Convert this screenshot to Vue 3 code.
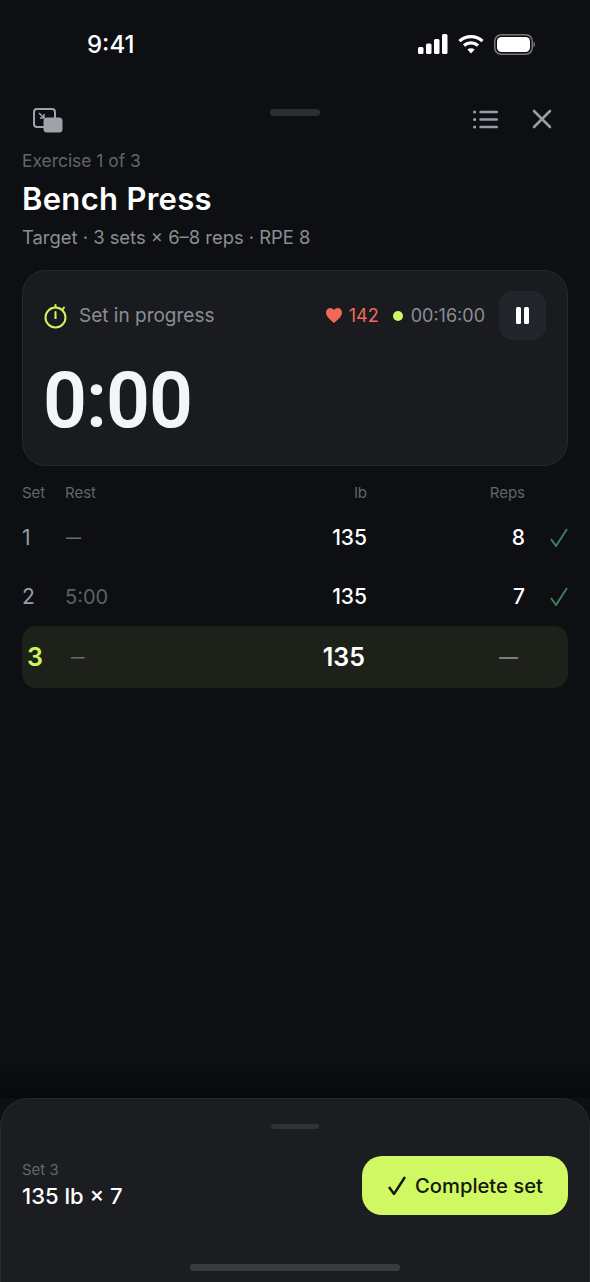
<script setup>
const sets = [
  { n: 1, rest: '—', lb: 135, reps: 8 },
  { n: 2, rest: '5:00', lb: 135, reps: 7 },
]
</script>

<template>
  <main class="page">
    <div class="status">
      <span class="clock">9:41</span>
      <div class="status-icons">
        <svg width="30" height="20" viewBox="0 0 30 20" fill="#fff">
          <rect x="0" y="13" width="5.5" height="7" rx="1.5" />
          <rect x="8" y="9.5" width="5.5" height="10.5" rx="1.5" />
          <rect x="16" y="5" width="5.5" height="15" rx="1.5" />
          <rect x="24" y="0" width="5.5" height="20" rx="1.5" />
        </svg>
        <svg width="26" height="20" viewBox="0 0 26 20" fill="none" stroke="#fff" stroke-width="3.2">
          <path d="M1.5 7.2C8 1 18 1 24.5 7.2" />
          <path d="M6 11.5c4-3.6 10-3.6 14 0" />
          <path d="M13 19.5l-3.6-4c2-1.7 5.2-1.7 7.2 0z" fill="#fff" stroke="none" />
        </svg>
        <svg width="41" height="21" viewBox="0 0 41 21" fill="none">
          <rect x=".75" y=".75" width="37.5" height="19.5" rx="6.5" stroke="#77797d" stroke-width="1.5" />
          <rect x="3" y="3" width="33" height="15" rx="4.5" fill="#fff" />
          <path d="M39.500 7.500c.9.400 1.500 1.600 1.500 3s-.6 2.600-1.500 3z" fill="#77797d" />
        </svg>
      </div>
    </div>

    <header class="top">
      <svg class="icon-pip" width="30" height="25" viewBox="0 0 30 25" fill="none">
        <rect x="1" y="1" width="21" height="18" rx="3" stroke="#9ea2ab" stroke-width="2" />
        <path d="M6 5l5 5M11 6v4H7" stroke="#9ea2ab" stroke-width="1.6" />
        <rect x="10.500" y="9.500" width="19" height="15" rx="3.500" fill="#9ea2ab" />
      </svg>
      <span class="grabber"></span>
      <div class="top-actions">
        <svg width="25" height="19" viewBox="0 0 25 19" fill="none" stroke="#9a9da5" stroke-width="2.400" stroke-linecap="round">
          <path d="M7.500 2H23.800M7.500 9.500H23.800M7.500 17H23.800" />
          <circle cx="1.600" cy="2" r="1.600" fill="#9a9da5" stroke="none" />
          <circle cx="1.600" cy="9.500" r="1.600" fill="#9a9da5" stroke="none" />
          <circle cx="1.600" cy="17" r="1.600" fill="#9a9da5" stroke="none" />
        </svg>
        <svg width="20" height="20" viewBox="0 0 20 20" fill="none" stroke="#9a9da5" stroke-width="2.600" stroke-linecap="round">
          <path d="M2 2l16 16M18 2L2 18" />
        </svg>
      </div>
    </header>

    <section class="intro">
      <div class="eyebrow">Exercise 1 of 3</div>
      <h1>Bench Press</h1>
      <div class="target">Target · 3 sets × 6–8 reps · RPE 8</div>
    </section>

    <section class="card">
      <div class="card-top">
        <svg width="24" height="26" viewBox="0 0 24 26" fill="none" stroke="#cff662" stroke-width="2" stroke-linecap="round">
          <circle cx="11.500" cy="14.500" r="10" />
          <path d="M11.500 2V4M11.500 9v6M20 4.500l-1 1.500" />
          <circle cx="11.500" cy="15" r="1" fill="#cff662" stroke="none" />
        </svg>
        <span class="state">Set in progress</span>
        <svg class="heart" width="16" height="15" viewBox="0 0 16 15" fill="#f2695c">
          <path d="M8 15C3 11 0 8.300 0 4.600 0 2 2 0 4.400 0 5.900 0 7.200.7 8 2c.8-1.300 2.100-2 3.600-2C14 0 16 2 16 4.600 16 8.300 13 11 8 15z" />
        </svg>
        <span class="bpm">142</span>
        <span class="dot"></span>
        <span class="elapsed">00:16:00</span>
        <button class="pause" aria-label="Pause">
          <span></span><span></span>
        </button>
      </div>
      <div class="time">0:00</div>
    </section>

    <section class="table">
      <div class="row head">
        <span>Set</span>
        <span>Rest</span>
        <span class="num">lb</span>
        <span class="num">Reps</span>
        <span></span>
      </div>
      <div v-for="s in sets" :key="s.n" class="row done">
        <span class="set">{{ s.n }}</span>
        <span class="rest" :class="{ 'rest-empty': s.rest === '—' }">{{ s.rest }}</span>
        <span class="num">{{ s.lb }}</span>
        <span class="num">{{ s.reps }}</span>
        <svg class="tick" width="18" height="19" viewBox="0 0 18 19" fill="none" stroke="#3f7c57" stroke-width="2">
          <path d="M1 11l5 7L17 1" />
        </svg>
      </div>
      <div class="row-active">
        <span class="set">3</span>
        <span class="rest rest-empty">—</span>
        <span class="num">135</span>
        <span class="num dash">—</span>
      </div>
    </section>

    <div class="fade"></div>

    <footer class="sheet">
      <span class="sheet-handle"></span>
      <div class="sheet-body">
        <div class="sheet-info">
          <div class="sheet-label">Set 3</div>
          <div class="sheet-value">135 lb × 7</div>
        </div>
        <button class="complete">
          <svg width="18" height="19" viewBox="0 0 18 19" fill="none" stroke="#14160f" stroke-width="2.400">
            <path d="M1 11l5 7L17 1" />
          </svg>
          Complete set
        </button>
      </div>
      <span class="home"></span>
    </footer>
  </main>
</template>

<style>
html, body {
  background: #0d0f13;
}
</style>

<style scoped>
.page {
  position: relative;
  display: flex;
  flex-direction: column;
  width: 590px;
  height: 1282px;
  overflow: hidden;
  background: #0d0f13;
  color: #fff;
  font-family: Inter, "Liberation Sans", sans-serif;
}

.status {
  display: flex;
  align-items: center;
  justify-content: space-between;
  height: 88px;
  flex-shrink: 0;
  padding: 0 55px 0 87px;
  box-sizing: border-box;
}

.clock {
  font-size: 24px;
  font-weight: 500;
}

.status-icons {
  display: flex;
  align-items: center;
  gap: 10px;
}

.top {
  position: relative;
  display: flex;
  align-items: center;
  justify-content: space-between;
  height: 50px;
  padding: 0 38px 0 33px;
  flex-shrink: 0;
}

.icon-pip {
  margin-top: 14px;
}

.grabber {
  position: absolute;
  left: 270px;
  top: 21px;
  width: 50px;
  height: 7px;
  border-radius: 4px;
  background: #2a2e35;
}

.top-actions {
  display: flex;
  align-items: center;
  gap: 34px;
  margin-top: 12px;
}

.intro {
  padding: 0 22px;
  margin-top: 13px;
}

.eyebrow {
  font-size: 17.400px;
  line-height: 20px;
  color: #62656d;
}

h1 {
  margin: 10px 0 0;
  font-size: 31px;
  line-height: 36px;
  font-weight: 600;
  letter-spacing: 0.3px;
}

.target {
  margin-top: 9px;
  font-size: 18.400px;
  line-height: 22px;
  color: #8b8e96;
}

.card {
  margin: 22px 22px 0;
  height: 196px;
  box-sizing: border-box;
  padding: 20px 21px;
  background: #191b1f;
  border: 1px solid #26282d;
  border-radius: 24px;
  flex-shrink: 0;
}

.card-top {
  display: flex;
  align-items: center;
  height: 49px;
}

.state {
  margin-left: 11px;
  font-size: 19px;
  color: #8b8e96;
}

.heart {
  margin-left: auto;
}

.bpm {
  margin-left: 7px;
  font-size: 18px;
  color: #f2695c;
}

.dot {
  width: 10px;
  height: 10px;
  margin-left: 14px;
  border-radius: 50%;
  background: #cff662;
}

.elapsed {
  margin-left: 8px;
  font-size: 18px;
  color: #8b8e96;
}

.pause {
  display: flex;
  align-items: center;
  justify-content: center;
  gap: 3px;
  width: 47px;
  height: 49px;
  margin-left: 14px;
  padding: 0;
  border: 0;
  border-radius: 14px;
  background: #22252b;
}

.pause span {
  width: 5px;
  height: 17px;
  border-radius: 1.500px;
  background: #fff;
}

.time {
  margin-top: 24px;
  margin-left: -1px;
  font-family: Roboto, Inter, sans-serif;
  font-size: 77px;
  line-height: 74px;
  font-weight: 600;
  letter-spacing: -1px;
  color: #f4f5f7;
}

.table {
  margin: 14px 22px 0;
}

.row {
  display: grid;
  grid-template-columns: 43px 1fr 80px 158px 43px;
  align-items: center;
  height: 59px;
  font-size: 21px;
  font-weight: 500;
}

.head {
  height: 24px;
  margin-bottom: 4px;
  font-size: 15px;
  font-weight: 400;
  color: #62656d;
}

.num {
  text-align: right;
}

.set {
  color: #9a9da5;
  font-weight: 400;
}

.rest {
  color: #5d6068;
  font-size: 20px;
  font-weight: 400;
}

.rest-empty {
  color: #6a6d74;
  font-size: 13.500px;
  font-weight: 600;
}

.row .rest-empty {
  margin-left: 1px;
  font-size: 15px;
}

.tick {
  justify-self: end;
}

.row-active {
  display: grid;
  grid-template-columns: 44px 1fr 80px 153px 50px;
  align-items: center;
  height: 62px;
  padding-left: 5px;
  border-radius: 14px;
  background: #1e2119;
  font-size: 25px;
  font-weight: 600;
}

.row-active .set {
  color: #cff662;
  font-weight: 600;
}

.dash {
  color: #7a7d80;
  font-size: 19px;
  font-weight: 600;
}

.fade {
  flex: 1;
  background: linear-gradient(to bottom, rgba(8, 9, 12, 0) 0%, rgba(8, 9, 12, 0) 90%, #08090c 100%);
}

.sheet {
  position: relative;
  height: 184px;
  flex-shrink: 0;
  box-sizing: border-box;
  padding: 0 21px;
  background: #1b1d21;
  border: 1px solid #26282d;
  border-bottom: 0;
  border-radius: 28px 28px 0 0;
}

.sheet-handle {
  display: block;
  width: 48px;
  height: 5px;
  margin: 25px auto 0;
  border-radius: 3px;
  background: #2d3138;
}

.sheet-body {
  display: flex;
  align-items: center;
  justify-content: space-between;
  margin-top: 27px;
}

.sheet-info {
  padding-bottom: 2px;
}

.sheet-label {
  font-size: 15px;
  line-height: 20px;
  color: #62656d;
}

.sheet-value {
  margin-top: 2px;
  font-size: 22px;
  line-height: 28px;
  font-weight: 500;
}

.complete {
  display: flex;
  align-items: center;
  gap: 9px;
  width: 206px;
  height: 59px;
  padding: 0 0 0 26px;
  box-sizing: border-box;
  border: 0;
  border-radius: 20px;
  background: #d0f862;
  color: #14160f;
  font-family: inherit;
  font-size: 20.200px;
  font-weight: 500;
}

.home {
  position: absolute;
  left: 189px;
  bottom: 11px;
  width: 210px;
  height: 7px;
  border-radius: 4px;
  background: #3a3b40;
}
</style>
